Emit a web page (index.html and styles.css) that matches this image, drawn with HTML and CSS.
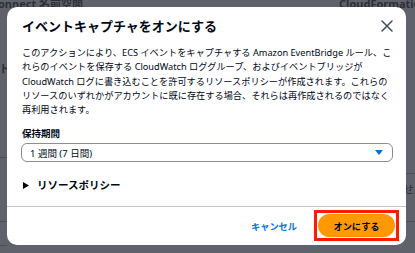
FILE: index.html
```html
<!DOCTYPE html>
<html lang="ja">
<head>
<meta charset="utf-8">
<link rel="stylesheet" href="styles.css">
</head>
<body>
<div class="page">
  <div class="page-top">
    <span class="bg-text bg-left">onnect 名前空間</span>
    <span class="bg-divider"></span>
    <span class="bg-text bg-right">CloudFormation スタ</span>
  </div>
  <div class="page-cols">
    <div class="col-left">
      <div class="bg-cell c1"><span class="bg-text">ト</span></div>
      <div class="bg-cell c2"></div>
      <div class="bg-cell c3"></div>
    </div>
    <div class="col-right">
      <div class="bg-cell r1"></div>
      <div class="bg-cell r2"><span class="bg-text">せ/</span></div>
    </div>
  </div>
</div>

<div class="overlay">
  <div class="modal" role="dialog">
    <div class="modal-header">
      <h2 class="title">イベントキャプチャをオンにする</h2>
      <button class="close" aria-label="閉じる">
        <svg width="12" height="12" viewBox="0 0 12 12"><path d="M1 1 L11 11 M11 1 L1 11" stroke="#414d5c" stroke-width="1.5" fill="none" stroke-linecap="round"/></svg>
      </button>
    </div>
    <div class="modal-body">
      <p class="desc">このアクションにより、ECS イベントをキャプチャする Amazon EventBridge ルール、こ<br>れらのイベントを保存する CloudWatch ロググループ、およびイベントブリッジが<br>CloudWatch ログに書き込むことを許可するリソースポリシーが作成されます。これらの<br>リソースのいずれかがアカウントに既に存在する場合、それらは再作成されるのではなく<br>再利用されます。</p>
      <div class="field">
        <div class="label">保持期間</div>
        <div class="select">
          <span>1 週間 (7 日間)</span>
          <svg class="caret" width="8" height="5" viewBox="0 0 8 5"><path d="M0 0 H8 L4 5 Z" fill="#0972d3"/></svg>
        </div>
      </div>
      <div class="expand">
        <svg class="expand-icon" width="6" height="7" viewBox="0 0 6 7"><path d="M0 0 L6 3.5 L0 7 Z" fill="#000716"/></svg>
        <span>リソースポリシー</span>
      </div>
    </div>
    <div class="modal-footer">
      <button class="link-btn">キャンセル</button>
      <span class="highlight"><button class="primary">オンにする</button></span>
    </div>
  </div>
</div>
</body>
</html>
```

FILE: styles.css
```css
* { box-sizing: border-box; }
html, body { margin: 0; padding: 0; }
body {
  width: 415px;
  height: 253px;
  overflow: hidden;
  background: #5f626a;
  font-family: "Noto Sans", "Noto Sans CJK JP", sans-serif;
  position: relative;
}
.page { width: 415px; height: 253px; }
.page-top {
  display: flex;
  align-items: flex-start;
  height: 8px;
}
.bg-text {
  font-size: 11px;
  font-weight: 700;
  color: #2c2f36;
  line-height: 12px;
  white-space: nowrap;
}
.bg-left { margin-left: -2px; margin-top: -2px; }
.bg-divider { width: 1px; height: 8px; background: #4c4f57; margin-left: 208px; }
.bg-right { margin-left: 48px; margin-top: -2px; }
.page-cols { display: flex; justify-content: space-between; }
.col-left { width: 7px; }
.col-right { width: 9px; }
.bg-cell { border-bottom: 1px solid #4c4f57; overflow: hidden; }
.c1 { height: 150px; padding-top: 48px; }
.c1 .bg-text { margin-left: -1px; }
.c2 { height: 64px; }
.c3 { height: 24px; }
.r1 { height: 166px; }
.r2 { height: 48px; padding-top: 3px; }
.r2 .bg-text { margin-left: -3px; font-weight: 400; }

.overlay {
  position: absolute;
  left: 0; top: 0;
  width: 415px; height: 253px;
  padding: 7px 9px 0 7px;
}
.modal {
  width: 399px;
  height: 238px;
  background: #ffffff;
  border-radius: 10px;
  display: flex;
  flex-direction: column;
  color: #000716;
}
.modal-header {
  display: flex;
  justify-content: space-between;
  align-items: center;
  padding: 10px 13px 0 15px;
}
.title {
  margin: 0;
  font-size: 13px;
  line-height: 18px;
  font-weight: 700;
}
.close {
  border: 0;
  background: none;
  padding: 0;
  width: 12px;
  height: 12px;
  display: flex;
}
.modal-body {
  padding: 11px 13px 0 15px;
  display: flex;
  flex-direction: column;
}
.desc {
  margin: 0;
  font-size: 9.2px;
  line-height: 14.3px;
  white-space: nowrap;
}
.field { margin-top: 10px; display: flex; flex-direction: column; }
.label {
  font-size: 9.5px;
  line-height: 14px;
  font-weight: 700;
}
.select {
  margin-top: 2px;
  margin-left: -1px;
  height: 19px;
  border: 1px solid #8c8c94;
  border-radius: 6px;
  display: flex;
  align-items: center;
  justify-content: space-between;
  padding: 0 9px 0 8px;
  font-size: 9.5px;
}
.caret { display: block; }
.expand {
  margin-top: 15px;
  display: flex;
  align-items: center;
  gap: 8px;
  font-size: 10.5px;
  line-height: 16px;
  font-weight: 700;
}
.expand-icon { margin-left: 1px; }
.modal-footer {
  margin-top: 13px;
  border-top: 1px solid #c6c6cd;
  display: flex;
  justify-content: flex-end;
  align-items: center;
  gap: 17px;
  padding: 3px 7px 2px 0;
}
.link-btn {
  border: 0;
  background: none;
  padding: 0;
  font-family: inherit;
  font-size: 9.2px;
  font-weight: 700;
  color: #0972d3;
}
.highlight {
  display: flex;
  border: 3px solid #ff1a00;
  padding: 1px;
}
.primary {
  width: 77px;
  height: 23px;
  border: 0;
  border-radius: 12px;
  background: #ff9900;
  color: #000716;
  font-family: inherit;
  font-size: 9.2px;
  font-weight: 700;
  padding: 0;
}
```
